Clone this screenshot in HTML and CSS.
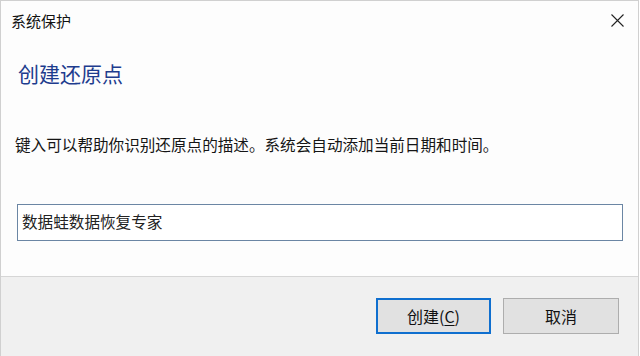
FILE: index.html
```html
<!DOCTYPE html>
<html lang="zh-CN">
<head>
<meta charset="utf-8">
<title>系统保护</title>
<link rel="stylesheet" href="styles.css">
</head>
<body>
<div class="window">
  <div class="titlebar">
    <span class="title">系统保护</span>
    <span class="close" aria-label="关闭">
      <svg width="13" height="13" viewBox="0 0 13 13"><path d="M0.5 0.5 L12.5 12.5 M12.5 0.5 L0.5 12.5" stroke="#222" stroke-width="1.1" fill="none"/></svg>
    </span>
  </div>
  <div class="content">
    <h1 class="heading">创建还原点</h1>
    <p class="desc">键入可以帮助你识别还原点的描述。系统会自动添加当前日期和时间。</p>
    <div class="field">数据蛙数据恢复专家</div>
  </div>
  <div class="footer">
    <button class="btn btn-default">创建(<u>C</u>)</button>
    <button class="btn">取消</button>
  </div>
</div>
</body>
</html>
```
FILE: styles.css
```css
html, body {
  margin: 0;
  padding: 0;
  background: #ffffff;
}
body {
  width: 640px;
  height: 356px;
  overflow: hidden;
  font-family: "Noto Sans CJK SC", "Noto Sans", sans-serif;
  color: #1a1a1a;
}
.window {
  box-sizing: border-box;
  width: 639px;
  height: 356px;
  border: 1px solid #d0d0d0;
  border-bottom: none;
  display: flex;
  flex-direction: column;
  background: #fdfdfd;
}
.titlebar {
  height: 40px;
  display: flex;
  justify-content: space-between;
  align-items: flex-start;
  padding: 12px 14px 0 10px;
  box-sizing: border-box;
}
.title {
  font-size: 15px;
  line-height: 15px;
  color: #111;
}
.close {
  display: block;
  width: 13px;
  height: 13px;
  margin-top: 1px;
}
.close svg { display: block; }
.content {
  flex: 1;
  padding-left: 16px;
  padding-right: 16px;
}
.heading {
  margin: 21px 0 0 1px;
  font-size: 21px;
  line-height: 22px;
  font-weight: normal;
  color: #1e3c8e;
}
.desc {
  margin: 52px 0 0 -2px;
  font-size: 15.6px;
  line-height: 16px;
  color: #151515;
}
.field {
  box-sizing: border-box;
  margin-top: 52px;
  width: 606px;
  height: 37px;
  border: 1px solid #6b86a4;
  background: #ffffff;
  padding: 8px 0 0 4px;
  font-size: 15.6px;
  line-height: 16px;
  color: #222;
}
.footer {
  height: 80px;
  box-sizing: border-box;
  background: #f0f0f0;
  border-top: 1px solid #d6d6d6;
  display: flex;
  justify-content: flex-end;
  align-items: flex-start;
  gap: 12px;
  padding: 21px 19px 0 0;
}
.btn {
  box-sizing: border-box;
  width: 116px;
  height: 36px;
  background: #e1e1e1;
  border: 1px solid #adadad;
  font-family: inherit;
  font-size: 16px;
  line-height: 16px;
  color: #111;
  padding: 0;
}
.btn-default {
  width: 115px;
  border: 2px solid #0f6fcf;
}
.btn u { text-decoration-thickness: 1px; text-underline-offset: 2px; }
```
